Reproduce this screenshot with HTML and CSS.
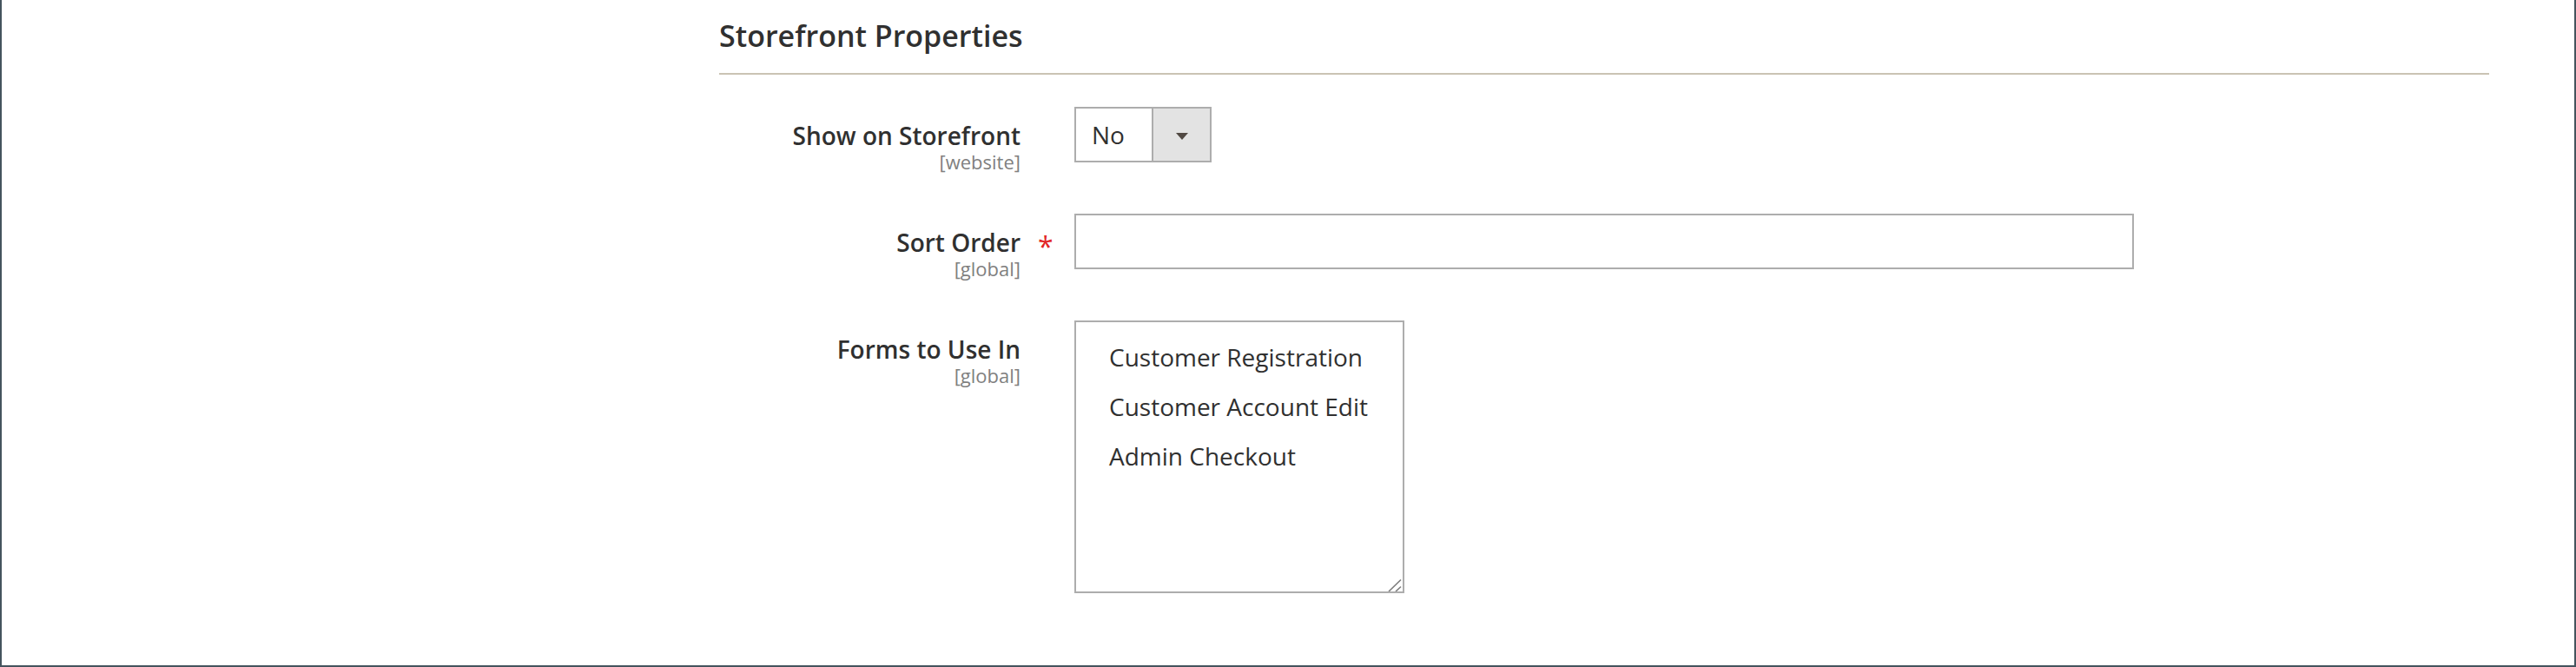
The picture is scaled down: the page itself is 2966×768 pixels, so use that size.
FILE: index.html
```html
<!DOCTYPE html>
<html lang="en">
<head>
<meta charset="utf-8">
<title>Storefront Properties</title>
<link rel="stylesheet" href="styles.css">
</head>
<body>
<div class="frame">
  <section class="fieldset">
    <h2 class="fieldset-title">Storefront Properties</h2>
    <div class="fields">
      <div class="field">
        <div class="field-label">
          <span class="label-text">Show on Storefront</span>
          <span class="scope">[website]</span>
        </div>
        <div class="field-marker"></div>
        <div class="field-control">
          <div class="select" role="combobox" aria-label="Show on Storefront">
            <span class="select-value">No</span>
            <span class="select-button"><span class="arrow"></span></span>
          </div>
        </div>
      </div>
      <div class="field">
        <div class="field-label">
          <span class="label-text">Sort Order</span>
          <span class="scope">[global]</span>
        </div>
        <div class="field-marker"><span class="required">*</span></div>
        <div class="field-control">
          <input class="input-text" type="text" aria-label="Sort Order">
        </div>
      </div>
      <div class="field">
        <div class="field-label">
          <span class="label-text">Forms to Use In</span>
          <span class="scope">[global]</span>
        </div>
        <div class="field-marker"></div>
        <div class="field-control">
          <div class="multiselect" role="listbox" aria-multiselectable="true" aria-label="Forms to Use In">
            <div class="option" role="option">Customer Registration</div>
            <div class="option" role="option">Customer Account Edit</div>
            <div class="option" role="option">Admin Checkout</div>
            <svg class="grip" width="18" height="16" viewBox="0 0 18 16" aria-hidden="true">
              <line x1="2" y1="16" x2="16" y2="2.5" stroke="#7c7c7c" stroke-width="1.6"/>
              <line x1="10" y1="16" x2="16" y2="10.5" stroke="#7c7c7c" stroke-width="1.6"/>
            </svg>
          </div>
        </div>
      </div>
    </div>
  </section>
</div>
</body>
</html>
```
FILE: styles.css
```css
* {
  box-sizing: border-box;
}

html,
body {
  margin: 0;
  padding: 0;
  background: #ffffff;
}

body {
  font-family: "Open Sans", "Noto Sans", "Liberation Sans", sans-serif;
  color: #303030;
}

.frame {
  height: 768px;
  border-left: 2px solid #44545d;
  border-right: 2px solid #44545d;
  border-bottom: 2px solid #44545d;
  background: #ffffff;
  padding: 18px 98px 0 826px;
}

.fieldset-title {
  margin: 0;
  font-size: 34px;
  font-weight: 600;
  line-height: 46px;
  color: #303030;
  padding-bottom: 20px;
  border-bottom: 2px solid #cac3b4;
}

.fields {
  margin-top: 37px;
  display: flex;
  flex-direction: column;
  gap: 50px;
}

.field {
  display: grid;
  grid-template-columns: 347px 62px 1fr;
  align-items: start;
}

.field-label {
  display: flex;
  flex-direction: column;
  align-items: flex-end;
  text-align: right;
  padding-top: 13px;
}

.label-text {
  font-size: 28px;
  font-weight: 600;
  line-height: 40px;
  color: #303030;
}

.scope {
  font-size: 22px;
  font-weight: 400;
  line-height: 20px;
  color: #808080;
}

.field-marker {
  padding-top: 22px;
  padding-left: 20px;
}

.required {
  display: block;
  font-size: 32px;
  font-weight: 500;
  line-height: 32px;
  color: #e22626;
}

.select {
  display: flex;
  width: 158px;
  height: 64px;
  border: 2px solid #adadad;
  background: #ffffff;
}

.select-value {
  flex: 0 0 87px;
  display: flex;
  align-items: center;
  padding-left: 18px;
  font-size: 28px;
  font-weight: 400;
  color: #303030;
}

.select-button {
  flex: 1;
  display: flex;
  align-items: center;
  justify-content: center;
  background: #e3e3e3;
  border-left: 2px solid #adadad;
  padding-top: 3px;
}

.arrow {
  width: 0;
  height: 0;
  border-left: 7px solid transparent;
  border-right: 7px solid transparent;
  border-top: 8px solid #514943;
}

.input-text {
  display: block;
  width: 1220px;
  height: 64px;
  margin: 0;
  border: 2px solid #adadad;
  border-radius: 0;
  background: #ffffff;
  font-family: inherit;
  font-size: 28px;
  padding: 0 18px;
  outline: none;
}

.multiselect {
  position: relative;
  width: 380px;
  height: 314px;
  border: 2px solid #adadad;
  background: #ffffff;
  padding-top: 12px;
}

.option {
  font-size: 28px;
  font-weight: 400;
  line-height: 57px;
  padding-left: 38px;
  color: #303030;
  white-space: nowrap;
}

.grip {
  position: absolute;
  right: 0;
  bottom: 0;
  display: block;
}
```
